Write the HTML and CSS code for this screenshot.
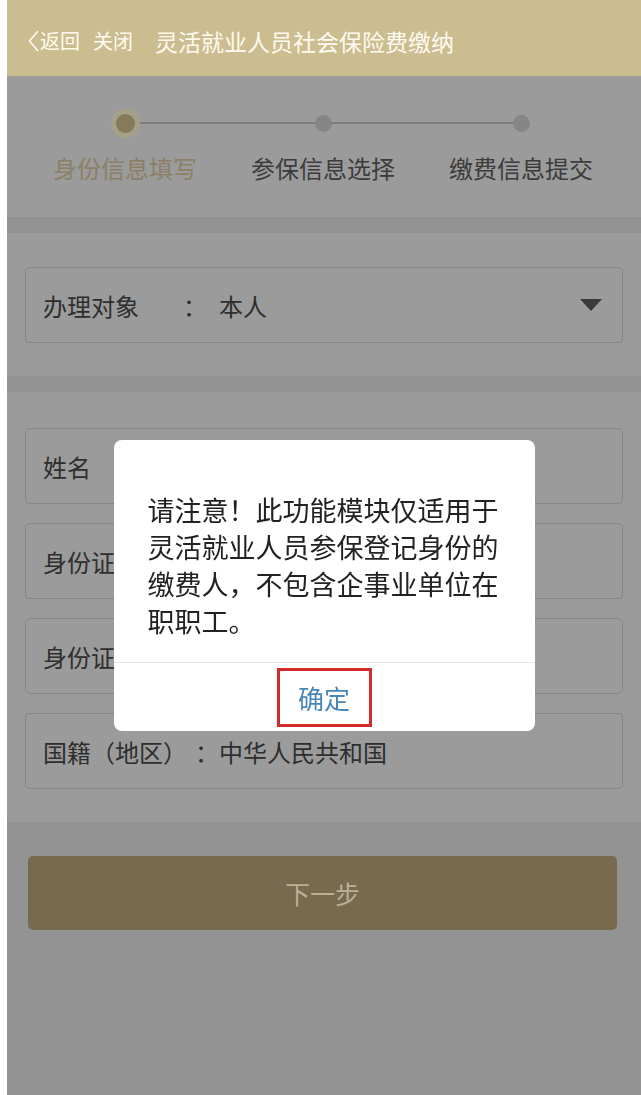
FILE: index.html
```html
<!DOCTYPE html>
<html lang="zh-CN">

<head>
    <meta charset="UTF-8">
    <title>灵活就业人员社会保险费缴纳</title>
    <link rel="stylesheet" href="styles.css">
</head>

<body>
    <div class="app">
        <header class="nav">
            <span class="nav-back">
                <svg class="nav-arrow" width="11" height="22" viewBox="0 0 11 22">
                    <polyline points="10,1 1.5,11 10,21" fill="none" stroke="#fffaf0" stroke-width="1.6" />
                </svg>返回
            </span>
            <span class="nav-close">关闭</span>
            <span class="nav-title">灵活就业人员社会保险费缴纳</span>
        </header>

        <!-- 步骤条 -->
        <section class="steps">
            <div class="step active">
                <div class="dot-wrap"><i class="dot"></i></div>
                <span class="step-text">身份信息填写</span>
            </div>
            <div class="step">
                <div class="dot-wrap"><i class="dot"></i></div>
                <span class="step-text">参保信息选择</span>
            </div>
            <div class="step">
                <div class="dot-wrap"><i class="dot"></i></div>
                <span class="step-text">缴费信息提交</span>
            </div>
        </section>

        <section class="panel panel-select">
            <div class="field">
                <span class="label label-select">办理对象</span>
                <span class="value"><span class="colon">：</span>本人</span>
                <i class="caret"></i>
            </div>
        </section>

        <section class="panel panel-form">
            <div class="field">
                <span class="label">姓名</span>
            </div>
            <div class="field">
                <span class="label">身份证件</span>
            </div>
            <div class="field">
                <span class="label">身份证号</span>
            </div>
            <div class="field">
                <span class="label label-wide">国籍（地区）</span>
                <span class="value">：中华人民共和国</span>
            </div>
        </section>

        <div class="actions">
            <button class="btn-next">下一步</button>
        </div>
    </div>

    <!-- 提示弹窗 -->
    <div class="mask">
        <div class="dialog">
            <div class="dialog-body">请注意！此功能模块仅适用于灵活就业人员参保登记身份的缴费人，不包含企事业单位在职职工。</div>
            <div class="dialog-footer">
                <span class="dialog-btn">确定</span>
            </div>
        </div>
    </div>
</body>

</html>
```

FILE: styles.css
```css
body {
    margin: 0;
    padding-left: 7px;
    background-color: #fff;
    font-family: "Noto Sans CJK SC", "Noto Sans", sans-serif;
    overflow: hidden;
}

.app {
    min-height: 1095px;
    background-color: #939393;
}

/* 顶部导航 */
.nav {
    height: 76px;
    box-sizing: border-box;
    padding: 5px 0 0 21px;
    display: flex;
    align-items: center;
    background-color: #cbbd8f;
    color: #fffaf0;
}

.nav-back {
    display: flex;
    align-items: center;
    font-size: 20px;
}

.nav-arrow {
    margin-right: 1px;
}

.nav-close {
    font-size: 20px;
    margin-left: 13px;
}

.nav-title {
    font-size: 23px;
    margin-left: 22px;
}

/* 步骤条 */
.steps {
    height: 141px;
    box-sizing: border-box;
    padding: 0 21px 0 19px;
    display: grid;
    grid-template-columns: repeat(3, 1fr);
    background-color: #9b9b9b;
    margin-bottom: 16px;
}

.step {
    position: relative;
    display: flex;
    flex-direction: column;
    align-items: center;
}

.step + .step::before {
    content: "";
    position: absolute;
    top: 46px;
    left: -50%;
    right: 50%;
    height: 2px;
    background-color: #7d7d7d;
}

.dot-wrap {
    position: relative;
    z-index: 1;
    width: 30px;
    height: 30px;
    margin-top: 32px;
    display: flex;
    justify-content: center;
    align-items: center;
}

.dot {
    width: 17px;
    height: 17px;
    border-radius: 50%;
    background-color: #868686;
}

.step.active .dot {
    width: 19px;
    height: 19px;
    background-color: #857a5a;
    box-shadow: 0 0 0 5px #a7a088;
}

.step-text {
    margin-top: 15px;
    font-size: 24px;
    line-height: 30px;
    color: #3c3c3c;
}

.step.active .step-text {
    color: #8b8064;
}

/* 表单区域 */
.panel {
    background-color: #9b9b9b;
    padding: 0 18px;
}

.panel-select {
    padding-top: 34px;
    padding-bottom: 33px;
    margin-bottom: 16px;
}

.panel-form {
    padding-top: 36px;
    padding-bottom: 33px;
    display: flex;
    flex-direction: column;
    gap: 19px;
}

.field {
    height: 76px;
    box-sizing: border-box;
    padding: 0 20px 0 17px;
    display: flex;
    align-items: center;
    border: 1px solid #858585;
    border-radius: 5px;
    font-size: 24px;
    color: #2e2e2e;
}

.label {
    width: 144px;
    flex-shrink: 0;
}

.label-select {
    width: 140px;
}

.label-wide {
    width: 152px;
}

.colon {
    margin-right: 12px;
}

.value {
    flex: 1;
}

.caret {
    width: 0;
    height: 0;
    border-left: 11px solid transparent;
    border-right: 11px solid transparent;
    border-top: 12px solid #3a3a3a;
}

/* 下一步 */
.actions {
    padding: 34px 24px 0 21px;
}

.btn-next {
    display: block;
    width: 100%;
    height: 74px;
    border: none;
    border-radius: 5px;
    background-color: #776a4e;
    color: #bbb093;
    font-family: inherit;
    font-size: 25px;
}

/* 弹窗 */
.mask {
    position: fixed;
    top: 0;
    right: 0;
    bottom: 0;
    left: 7px;
    display: flex;
    justify-content: center;
    align-items: flex-start;
    padding-top: 440px;
}

.dialog {
    width: 421px;
    background-color: #fff;
    border-radius: 8px;
    overflow: hidden;
}

.dialog-body {
    padding: 51px 34px 23px;
    font-size: 27px;
    line-height: 37px;
    color: #222;
}

.dialog-footer {
    height: 68px;
    border-top: 1px solid #e6e6e6;
    display: flex;
    justify-content: center;
    align-items: center;
}

.dialog-btn {
    width: 95px;
    height: 59px;
    box-sizing: border-box;
    border: 3px solid #d42a2a;
    display: flex;
    justify-content: center;
    align-items: center;
    font-size: 26px;
    color: #4a87b9;
}
```
